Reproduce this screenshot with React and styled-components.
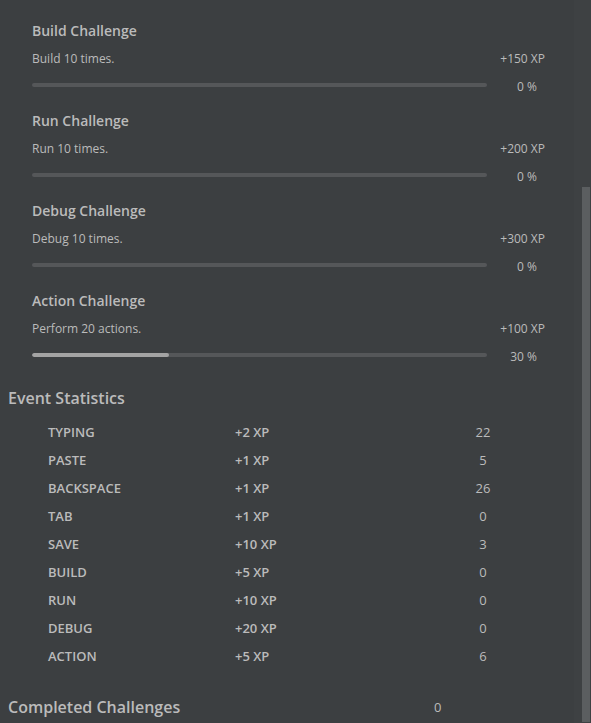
import React from "react";
import styled, { createGlobalStyle } from "styled-components";

const GlobalStyle = createGlobalStyle`
  html, body {
    margin: 0;
    padding: 0;
    background: #3c3f41;
  }
  body {
    font-family: "Open Sans", "Noto Sans", "DejaVu Sans", sans-serif;
    color: #bbbbbb;
  }
`;

const StPage = styled.div`
  display: flex;
  width: 591px;
  height: 723px;
  overflow: hidden;
  background: #3c3f41;
`;

const StContent = styled.div`
  flex: 1;
  display: flex;
  flex-direction: column;
  padding-top: 21px;
`;

const StScrollTrack = styled.div`
  width: 17px;
  display: flex;
  justify-content: flex-end;
  background: #3e4143;
  .thumb {
    width: 8px;
    margin-top: 187px;
    margin-right: 1px;
    height: 535px;
    background: #5b5e60;
  }
`;

const StChallenge = styled.div`
  display: flex;
  flex-direction: column;
  height: 90px;
  padding-left: 32px;
  width: 513px;
  .title {
    font-size: 14px;
    font-weight: 600;
    line-height: 20px;
  }
  .descRow {
    display: flex;
    justify-content: space-between;
    font-size: 12px;
    line-height: 18px;
    margin-top: 9px;
  }
  .barRow {
    display: flex;
    align-items: center;
    height: 18px;
    margin-top: 8px;
    padding-right: 8px;
  }
  .percent {
    width: 50px;
    text-align: right;
    font-size: 12px;
    line-height: 18px;
    margin-top: 3px;
  }
`;

const StBar = styled.div`
  flex: 0 0 455px;
  height: 4px;
  border-radius: 2px;
  background: #555759;
  overflow: hidden;
  .fill {
    height: 100%;
    border-radius: 2px;
    background: #a3a3a3;
  }
`;

const StHeading = styled.div`
  padding-left: 8px;
  font-size: 16px;
  font-weight: 600;
  line-height: 22px;
  margin-top: ${(p) => p.$top || 0}px;
  display: flex;
  .value {
    margin-left: auto;
    width: 140px;
    font-weight: 400;
    font-size: 13px;
  }
`;

const StTable = styled.div`
  display: grid;
  grid-template-columns: 187px 187px 122px;
  grid-auto-rows: 28px;
  padding-left: 48px;
  margin-top: 9px;
  font-size: 13px;
  font-weight: 600;
  align-items: center;
  .count {
    text-align: center;
    font-weight: 400;
  }
`;

const challenges = [
  { name: "Build Challenge", desc: "Build 10 times.", xp: 150, pct: 0 },
  { name: "Run Challenge", desc: "Run 10 times.", xp: 200, pct: 0 },
  { name: "Debug Challenge", desc: "Debug 10 times.", xp: 300, pct: 0 },
  { name: "Action Challenge", desc: "Perform 20 actions.", xp: 100, pct: 30 },
];

const events = [
  ["TYPING", 2, 22],
  ["PASTE", 1, 5],
  ["BACKSPACE", 1, 26],
  ["TAB", 1, 0],
  ["SAVE", 10, 3],
  ["BUILD", 5, 0],
  ["RUN", 10, 0],
  ["DEBUG", 20, 0],
  ["ACTION", 5, 6],
];

const App = () => {
  return (
    <>
      <GlobalStyle />
      <StPage>
        <StContent>
          {challenges.map((c) => (
            <StChallenge key={c.name}>
              <div className="title">{c.name}</div>
              <div className="descRow">
                <span>{c.desc}</span>
                <span>+{c.xp} XP</span>
              </div>
              <div className="barRow">
                <StBar>
                  <div className="fill" style={{ width: `${c.pct}%` }} />
                </StBar>
                <div className="percent">{c.pct} %</div>
              </div>
            </StChallenge>
          ))}
          <StHeading $top={6}>Event Statistics</StHeading>
          <StTable>
            {events.map(([name, xp, count]) => (
              <React.Fragment key={name}>
                <div>{name}</div>
                <div>+{xp} XP</div>
                <div className="count">{count}</div>
              </React.Fragment>
            ))}
          </StTable>
          <StHeading $top={26}>
            Completed Challenges
            <span className="value">0</span>
          </StHeading>
        </StContent>
        <StScrollTrack>
          <div className="thumb" />
        </StScrollTrack>
      </StPage>
    </>
  );
};

export default App;
